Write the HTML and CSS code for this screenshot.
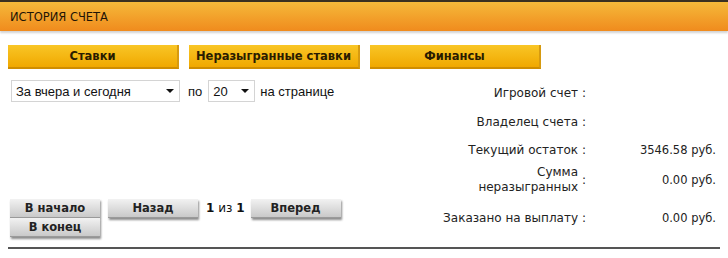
FILE: index.html
```html
<!DOCTYPE html>
<html lang="ru">
<head>
  <meta charset="UTF-8">
  <title>История счета</title>
  <link rel="stylesheet" href="styles.css">
</head>
<body>
  <div class="header">ИСТОРИЯ СЧЕТА</div>

  <div class="tabs">
    <button class="tab">Ставки</button>
    <button class="tab">Неразыгранные ставки</button>
    <button class="tab">Финансы</button>
  </div>

  <div class="content">
    <div class="left">
      <div class="filters">
        <span class="select-wrap period">
          <select>
            <option>За вчера и сегодня</option>
            <option>За неделю</option>
            <option>За месяц</option>
          </select>
        </span>
        <span class="label">по</span>
        <span class="select-wrap per-page">
          <select>
            <option>20</option>
            <option>50</option>
            <option>100</option>
          </select>
        </span>
        <span class="label">на странице</span>
      </div>

      <div class="pager">
        <div class="pager-ends">
          <button class="nav">В начало</button>
          <button class="nav">В конец</button>
        </div>
        <button class="nav">Назад</button>
        <span class="pages"><b>1</b> из <b>1</b></span>
        <button class="nav">Вперед</button>
      </div>
    </div>

    <table class="info">
      <tr class="row-first">
        <td class="name">Игровой счет</td>
        <td class="colon">:</td>
        <td class="value"></td>
      </tr>
      <tr>
        <td class="name">Владелец счета</td>
        <td class="colon">:</td>
        <td class="value"></td>
      </tr>
      <tr>
        <td class="name">Текущий остаток</td>
        <td class="colon">:</td>
        <td class="value">3546.58 руб.</td>
      </tr>
      <tr class="row-double">
        <td class="name">Сумма<br>неразыгранных</td>
        <td class="colon">:</td>
        <td class="value">0.00 руб.</td>
      </tr>
      <tr class="row-last">
        <td class="name">Заказано на выплату</td>
        <td class="colon">:</td>
        <td class="value">0.00 руб.</td>
      </tr>
    </table>
  </div>

  <div class="rule"></div>
</body>
</html>
```

FILE: styles.css
```css
* {
  box-sizing: border-box;
}

body {
  margin: 0;
  background: #fff;
  font-family: "DejaVu Sans", Verdana, sans-serif;
  font-size: 11px;
  color: #222;
}

.header {
  height: 31px;
  border-top: 2px solid #3a3020;
  padding: 8px 10px 0;
  background: linear-gradient(#f5b93a, #f08b1d);
  box-shadow: 0 2px 2px rgba(0, 0, 0, 0.18);
  color: #1e1406;
  font-size: 11.5px;
}

.tabs {
  display: flex;
  gap: 10px;
  padding: 14px 8px 0;
}

.tab {
  width: 171px;
  height: 24px;
  padding: 0;
  border: none;
  border-bottom: 2px solid #cf8d00;
  border-right: 2px solid #d69a10;
  background: linear-gradient(#f9c626, #f0a800);
  color: #2a1c00;
  font-family: inherit;
  font-size: 11.5px;
  font-weight: bold;
  white-space: nowrap;
  cursor: pointer;
}

.content {
  display: flex;
  justify-content: space-between;
  padding: 0 12px 0 10px;
}

.left {
  display: flex;
  flex-direction: column;
  justify-content: space-between;
  height: 168px;
  padding-top: 11px;
}

.filters {
  display: flex;
  align-items: center;
  gap: 5px;
  font-family: "Liberation Sans", Arial, sans-serif;
  font-size: 13px;
  color: #111;
}

.select-wrap {
  position: relative;
  display: inline-block;
  margin-left: 1px;
}

.period {
  margin-right: 3px;
}

.select-wrap::after {
  content: "";
  position: absolute;
  right: 6px;
  top: 9px;
  border-left: 4px solid transparent;
  border-right: 4px solid transparent;
  border-top: 4px solid #111;
  pointer-events: none;
}

select {
  appearance: none;
  -webkit-appearance: none;
  height: 22px;
  border: 1px solid #d4d4d4;
  border-radius: 0;
  background: #fff;
  padding: 0 4px;
  font-family: "Liberation Sans", Arial, sans-serif;
  font-size: 13px;
  color: #111;
}

.period select {
  width: 169px;
}

.per-page select {
  width: 47px;
}

.pager {
  display: flex;
  align-items: flex-start;
  gap: 8px;
}

.pager-ends {
  display: flex;
  flex-direction: column;
}

.nav {
  width: 90px;
  height: 19px;
  padding: 0;
  border: none;
  border-bottom: 1px solid #9a9a9a;
  background: linear-gradient(#f2f2f2, #c9c9c9);
  box-shadow: 1px 2px 2px rgba(0, 0, 0, 0.45);
  color: #222;
  font-family: inherit;
  font-size: 11.5px;
  font-weight: bold;
  white-space: nowrap;
  cursor: pointer;
}

.pages {
  padding-top: 2px;
  margin-right: -2px;
  font-size: 12px;
  color: #111;
}

.info {
  margin-top: 9px;
  border-collapse: collapse;
}

.info td {
  padding: 0;
  height: 28px;
  vertical-align: middle;
}

.info .row-first td {
  height: 30px;
}

.info .row-double td {
  height: 32px;
}

.info .row-last td {
  height: 44px;
}

.name {
  text-align: right;
  font-size: 12px;
  line-height: 15px;
}

.colon {
  width: 10px;
  font-size: 12px;
  padding-left: 4px !important;
}

.value {
  width: 128px;
  text-align: right;
  font-size: 11.5px;
}

.rule {
  height: 2px;
  margin: 7px 8px 0;
  background: #555;
}
```
